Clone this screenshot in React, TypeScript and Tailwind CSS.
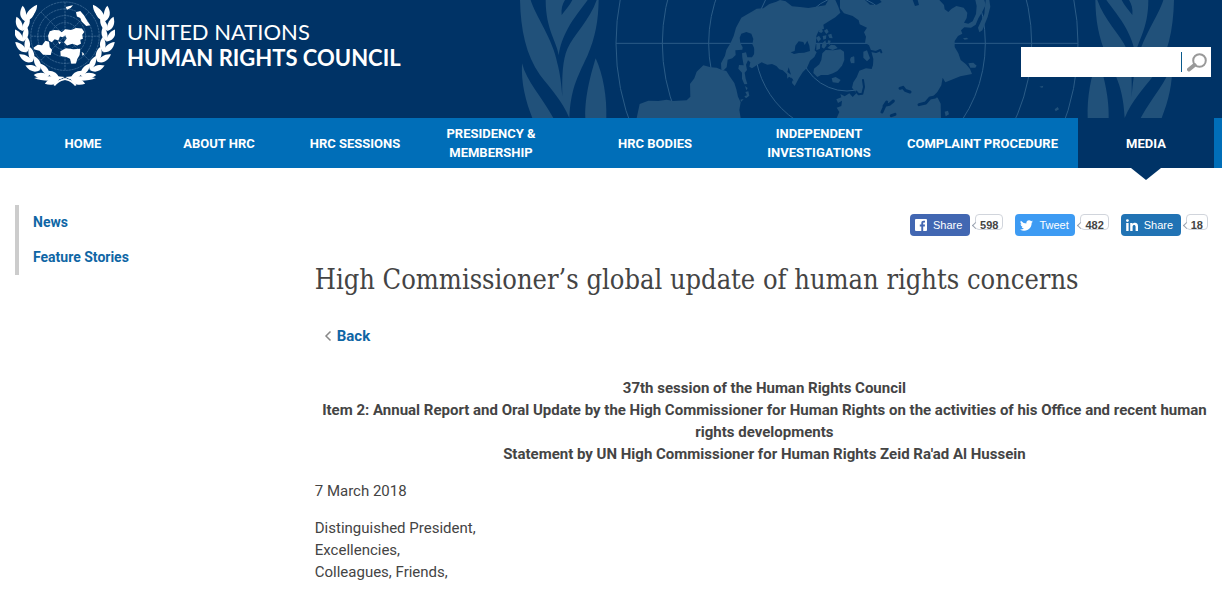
import React from 'react';

const navItems = [
  { label: 'HOME' },
  { label: 'ABOUT HRC' },
  { label: 'HRC SESSIONS' },
  { label: 'PRESIDENCY & MEMBERSHIP' },
  { label: 'HRC BODIES' },
  { label: 'INDEPENDENT INVESTIGATIONS' },
  { label: 'COMPLAINT PROCEDURE' },
  { label: 'MEDIA', active: true },
];

// x, y and heading of each pair of olive leaves on the left branch
const leaves = [
  [148, 237, -84],
  [117, 228, -62],
  [90, 211, -48],
  [67, 186, -36],
  [50, 157, -24],
  [40, 125, -12],
  [37, 93, 2],
  [43, 63, 18],
];

function OliveBranch() {
  return (
    <g>
      {leaves.map(([x, y, angle]) => (
        <g key={y} transform={`translate(${x} ${y})`}>
          <path transform={`rotate(${angle - 20})`} d="M0 0C-16-12-15-30-4-46C7-34 9-12 0 0Z" />
          <path transform={`rotate(${angle + 20})`} d="M0 0C-9-12-7-34 4-46C15-30 14-12 0 0Z" />
        </g>
      ))}
      <path d="M43 63C44 42 58 24 81 14C81 36 68 50 43 63Z" />
      <path d="M164 232C140 228 100 230 72 235C98 247 142 246 164 232Z" />
      <path d="M160 236C182 238 192 246 200 256L195 259C187 248 176 242 158 240Z" />
    </g>
  );
}

function Emblem() {
  return (
    <svg viewBox="15 0 300 262" className="h-[87px] w-[100px] shrink-0" fill="#fff" aria-hidden="true">
      <OliveBranch />
      <g transform="translate(330 0) scale(-1 1)">
        <OliveBranch />
      </g>
      <g fill="none" stroke="#5f88ae" strokeWidth="1.6" strokeDasharray="7 2">
        <circle cx="165" cy="109" r="103" />
        <circle cx="165" cy="109" r="82" />
        <circle cx="165" cy="109" r="62" />
        <circle cx="165" cy="109" r="41" />
        <circle cx="165" cy="109" r="20" />
        <path d="M62 109H268M165 6V212M92 36L238 182M238 36L92 182" />
      </g>
      <path d="M114 108L119 94L132 90L147 91L155 97L166 88L184 90L198 84L216 86L223 96L217 105L219 117L211 120L213 132L202 137L187 132L171 137L162 127L170 116L166 106L158 112L150 110L145 122L134 118L125 127L116 122Z" />
      <path d="M70 144L83 135L96 136L106 123L117 126L119 142L126 150L122 166L99 165L88 153L73 149Z" />
      <path d="M151 154L168 145L190 148L211 147L209 166L202 178L198 191L184 192L180 177L169 172L152 169Z" />
      <path d="M198 37L211 33L222 46L233 65L241 76L229 78L215 65L211 54L201 50Z" />
      <path d="M167 21L178 18L189 16L182 24L171 29ZM144 124L153 128L148 133ZM217 156L223 163L217 168Z" />
    </svg>
  );
}

function BannerLeaves() {
  return (
    <g>
      <path d="M60 0H92C105 45 160 120 172 190C180 220 184 250 187 290C186 230 187 180 203 145C220 105 270 60 290 0H296C295 60 287 110 262 168C230 235 212 270 208 354C185 300 155 270 120 225C78 165 62 90 60 0Z" />
      <path d="M137 0H195C187 12 183 28 185 45C196 30 210 15 217 0H263C245 25 220 55 204 85C190 112 180 135 176 166C171 125 137 90 137 0Z" />
      <path d="M66 190C80 245 125 290 160 354H97C77 304 63 250 66 190Z" />
      <path d="M287 175C275 215 254 285 256 354H319C321 293 310 225 287 175Z" />
    </g>
  );
}

function BannerMap() {
  return (
    <svg
      viewBox="0 0 2166 354"
      className="absolute inset-y-0 right-0 h-full w-[722px]"
      fill="#21517a"
      aria-hidden="true"
    >
      <BannerLeaves />
      <g transform="translate(2082 0) scale(-1 1)">
        <BannerLeaves />
      </g>
      <g fill="none" stroke="#2b5c87" strokeWidth="3">
        <circle cx="1041" cy="130" r="693" />
        <circle cx="1041" cy="130" r="554" />
        <circle cx="1041" cy="130" r="415" />
        <circle cx="1041" cy="130" r="277" />
        <circle cx="1041" cy="130" r="143" />
        <path d="M348 130H1734" />
      </g>
      {/* the Americas */}
      <path d="M410 354L419 312L445 302L475 303L500 299L520 303L560 301L571 290L570 252L583 235L590 215L610 196L632 202L650 203L664 209L679 213L690 230L703 249L709 268L714 290L722 307L718 330L722 354Z" />
      <path d="M664 209L663 190L675 167L679 150L692 128L701 108L708 83L724 53L742 43L759 33L770 26L790 25L808 12L829 5L840 0L857 4L876 19L900 21L925 24L948 20L976 16L985 0H1006L1015 20L1021 38L1006 52L983 66L970 74L972 86L956 92L949 108L948 130L944 151L950 157L943 171L930 182L921 203L908 217L897 234L884 258L876 249L878 237L867 230L862 236L861 223L848 211L838 208L829 198L816 192L802 194L785 187L770 196L756 205L748 200L751 187L744 181L738 194L741 210L734 218L737 236L742 252L733 253L726 236L726 218L715 206L717 195L731 196L727 173L726 160L738 157L742 172L756 172L762 163L764 147L757 133L760 117L754 101L739 96L724 101L719 113L721 129L728 142L727 149L706 151L707 165L697 175L683 179L680 202L671 211Z" />
      <path d="M752 39L770 29L789 25L776 34ZM735 258L743 264L739 271ZM736 276L745 274L748 287L738 295L733 289L741 286ZM721 299L731 297L724 305Z" />
      <path fill="#003366" d="M872 157L884 153L886 137L896 124L910 126L914 135L922 122L928 137L930 153L912 158L896 159L882 162ZM866 202L873 224L862 216ZM874 232L881 244L875 240Z" />
      {/* Arctic islands */}
      <path d="M955 95L964 84L969 94L964 99ZM972 92L981 86L986 96L979 102ZM948 113L957 107L963 117L955 126ZM968 108L979 106L978 116L970 119ZM984 104L994 101L998 115L988 114ZM949 132L961 130L960 146L949 151ZM967 130L976 121L980 136L972 146L965 142ZM984 121L992 122L989 135L983 130ZM982 144L993 134L1005 136L1013 144L998 150Z" />
      <path d="M967 160L977 150L1000 151L1021 148L1032 155L1033 180L1026 197L1012 213L999 220L984 225L963 225L952 231L940 219L942 206L958 193L964 180ZM995 235L1007 231L1022 240L1015 249L998 247ZM1053 172L1062 169L1063 190L1053 189L1050 180Z" />
      {/* Eurasia */}
      <path d="M1020 0H1095L1110 14L1130 14L1145 6L1140 0H1238L1245 18L1257 15L1253 0H1318L1332 15L1334 28L1345 36L1354 27L1369 18L1391 23L1402 38L1400 54L1392 68L1405 71L1418 64L1428 42L1430 18L1426 0H1453L1457 15L1446 37L1435 55L1427 74L1413 83L1393 82L1383 91L1387 101L1374 108L1364 123L1364 141L1375 160L1382 180L1398 193L1410 207L1416 222L1381 229L1355 239L1336 247L1328 233L1324 256L1312 276L1298 290L1313 293L1322 311L1323 354H1010L1018 336L1010 323L1024 318L1026 302L1014 309L1009 298L1024 292L1021 282L1034 289L1048 280L1058 291L1069 280L1056 263L1060 247L1070 232L1078 212L1098 205L1115 207L1119 195L1120 177L1113 151L1107 136L1095 128L1098 110L1092 97L1101 83L1079 73L1076 61L1058 48L1032 40L1020 25Z" />
      <path d="M1090 155L1101 151L1110 175L1101 184L1090 173ZM1052 174L1063 170V188L1053 190ZM1457 0H1468L1471 20L1463 51L1447 91L1438 97L1434 83L1443 64L1453 42ZM1405 190L1420 188L1430 197L1426 203L1411 203ZM1389 115L1400 113L1405 117L1394 119ZM1334 335L1344 332L1347 343L1337 349ZM1618 260L1630 257L1627 264ZM1664 328L1673 321L1677 328L1667 334Z" />
      <g fill="none" stroke="#003366" strokeWidth="9" strokeLinecap="round" strokeLinejoin="round">
        <path d="M1200 265L1209 262L1216 271L1230 276" />
        <path d="M1257 314L1277 309L1290 294L1305 291" />
        <path strokeWidth="6" d="M1089 240L1092 261L1087 281L1076 283L1069 275M1113 153L1128 156L1141 150L1144 157" />
        <path d="M1146 336L1155 316L1168 313L1180 303M1152 318L1160 306M1174 347L1185 343" />
      </g>
    </svg>
  );
}

function FacebookIcon() {
  return (
    <svg viewBox="0 0 12 12" className="size-3 shrink-0" aria-hidden="true">
      <rect width="12" height="12" rx="1" fill="#fff" />
      <path d="M6.3 12V7.4H4.8V5.6H6.3V4.2C6.3 2.6 7.2 1.8 8.7 1.8H10V3.5H9.1C8.4 3.5 8.2 3.8 8.2 4.4V5.6H10L9.8 7.4H8.2V12Z" fill="#4267b2" />
    </svg>
  );
}

function TwitterIcon() {
  return (
    <svg viewBox="0 2 24 20" className="h-[11px] w-[13px] shrink-0" fill="#fff" aria-hidden="true">
      <path d="M24 4.6a10 10 0 0 1-2.8.8 5 5 0 0 0 2.2-2.7 10 10 0 0 1-3.1 1.2 4.9 4.9 0 0 0-8.4 4.5A14 14 0 0 1 1.7 3.1a4.9 4.9 0 0 0 1.5 6.6 4.9 4.9 0 0 1-2.2-.6v.1a4.9 4.9 0 0 0 3.9 4.8 5 5 0 0 1-2.2.1 4.9 4.9 0 0 0 4.6 3.4A9.9 9.9 0 0 1 0 19.5a14 14 0 0 0 21.5-12.4A10 10 0 0 0 24 4.6Z" />
    </svg>
  );
}

function LinkedinIcon() {
  return (
    <svg viewBox="0 0 12 12" className="size-3 shrink-0" fill="#fff" aria-hidden="true">
      <circle cx="1.4" cy="1.6" r="1.4" />
      <path d="M.2 4H2.6V12H.2ZM4.2 4H6.5V5.1C7.6 3.3 12 3.1 12 7V12H9.6V7.7C9.6 5.3 6.6 5.5 6.6 7.7V12H4.2Z" />
    </svg>
  );
}

const shares = [
  { id: 'facebook', label: 'Share', count: 598, icon: <FacebookIcon />, color: 'bg-[#4267b2]' },
  { id: 'twitter', label: 'Tweet', count: 482, icon: <TwitterIcon />, color: 'bg-[#3d9bf3]' },
  { id: 'linkedin', label: 'Share', count: 18, icon: <LinkedinIcon />, color: 'bg-[#2173b4]' },
];

function ShareBar() {
  return (
    <div className="flex justify-end gap-3 pr-1.5 font-['Liberation_Sans',sans-serif]">
      {shares.map((share) => (
        <div key={share.id} className="flex items-start gap-[5px]">
          <button
            type="button"
            className={`flex h-[22px] w-[60px] items-center gap-1.5 rounded pl-[5px] text-[11px] text-white ${share.color}`}
          >
            {share.icon}
            {share.label}
          </button>
          <span className="relative flex h-4 items-center rounded border border-gray-300 bg-white px-1 pt-1.5 text-[11px] font-bold text-[#444]">
            <span className="absolute top-[8px] -left-[3px] size-[5px] rotate-45 border-b border-l border-gray-400 bg-white" />
            {share.count}
          </span>
        </div>
      ))}
    </div>
  );
}

function Header() {
  return (
    <header>
      <div className="relative flex h-[118px] items-start justify-between overflow-hidden bg-[#003366] pr-[11px] pl-[15px]">
        <BannerMap />
        <a href="#" className="relative flex gap-3 text-white">
          <Emblem />
          <span className="flex flex-col pt-[19px] font-['Lato',sans-serif] text-[22px] leading-[26px] whitespace-nowrap">
            <span>UNITED NATIONS</span>
            <span className="font-bold">HUMAN RIGHTS COUNCIL</span>
          </span>
        </a>
        <form className="relative mt-[47px] flex h-[30px] w-[190px] items-center bg-white">
          <input type="text" aria-label="Search" className="h-full w-40 px-2 text-sm outline-none" />
          <button
            type="submit"
            aria-label="Submit search"
            className="flex h-5 flex-1 items-center justify-center border-l border-[#0a5a8c]"
          >
            <svg viewBox="0 0 20 19" className="h-[19px] w-5" fill="none" stroke="#999" aria-hidden="true">
              <circle cx="12.5" cy="7.5" r="6.3" strokeWidth="2" />
              <path d="M7.5 12L2 16.5" strokeWidth="4" strokeLinecap="round" />
            </svg>
          </button>
        </form>
      </div>
      <nav className="grid h-[50px] grid-cols-[136fr_136fr_136fr_136fr_192fr_136fr_191fr_136fr] bg-[#006eb8] pr-2 pl-[15px]">
        {navItems.map((item) => (
          <a
            key={item.label}
            href="#"
            className={`relative flex items-center justify-center px-3 text-center text-[13px] leading-[19px] font-bold text-white ${
              item.active ? 'bg-[#003366]' : ''
            }`}
          >
            {item.label}
            {item.active && (
              <span className="absolute top-full left-1/2 -translate-x-1/2 border-x-[15px] border-t-[12px] border-x-transparent border-t-[#003366]" />
            )}
          </a>
        ))}
      </nav>
    </header>
  );
}

export default function App() {
  return (
    <div className="bg-white font-['Roboto',sans-serif] text-[15px] leading-[22px] text-[#444]">
      <Header />
      <div className="flex pr-2 pl-[15px]">
        <aside className="w-1/4 shrink-0 pt-[37px]">
          <ul className="border-l-4 border-[#ccc] pl-3.5 text-sm leading-[35px] font-bold text-[#0f66a5]">
            <li>
              <a href="#">News</a>
            </li>
            <li>
              <a href="#">Feature Stories</a>
            </li>
          </ul>
        </aside>
        <main className="min-w-0 flex-1 pt-[46px]">
          <ShareBar />
          <h1 className="mt-7 font-['Roboto_Slab','DejaVu_Serif_Condensed','DejaVu_Serif',serif] text-[27px] leading-8">
            High Commissioner’s global update of human rights concerns
          </h1>
          <a href="#" className="mt-[29px] flex items-center gap-1 pl-2 font-bold text-[#0f66a5]">
            <svg viewBox="0 0 10 12" className="h-3 w-2.5 shrink-0" fill="none" stroke="#888" strokeWidth="1.5" aria-hidden="true">
              <path d="M7.5 1.5L3 6L7.5 10.5" />
            </svg>
            Back
          </a>
          <p className="mt-[30px] text-center font-bold">
            37th session of the Human Rights Council
            <br />
            Item 2: Annual Report and Oral Update by the High Commissioner for Human Rights on the activities of his
            Office and recent human rights developments
            <br />
            Statement by UN High Commissioner for Human Rights Zeid Ra'ad Al Hussein
          </p>
          <p className="mt-[15px]">7 March 2018</p>
          <p className="mt-[15px]">
            Distinguished President,
            <br />
            Excellencies,
            <br />
            Colleagues, Friends,
          </p>
        </main>
      </div>
    </div>
  );
}
